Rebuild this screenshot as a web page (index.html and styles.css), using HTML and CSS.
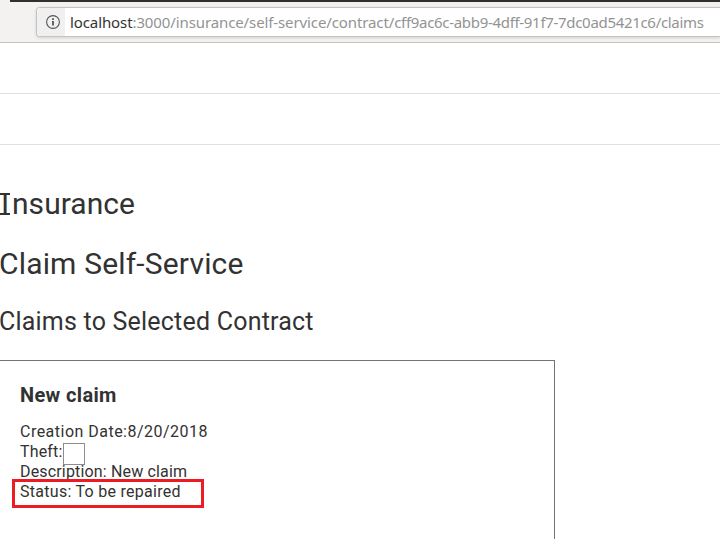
FILE: index.html
```
<!DOCTYPE html>
<html lang="en">
<head>
<meta charset="utf-8">
<title>Insurance – Claims</title>
<link rel="stylesheet" href="styles.css">
</head>
<body>
<div class="browser">
  <div class="address">
    <span class="identity">
      <svg width="14" height="14" viewBox="0 0 14 14" fill="none" stroke="#555">
        <circle cx="7" cy="7" r="6.4" stroke-width="1.1"/>
        <path d="M7 6v4.5M7 3.2v1.7" stroke-width="1.8"/>
      </svg>
    </span>
    <span class="url"><b>localhost</b>:3000/insurance/self-service/contract/<span class="id">cff9ac6c-abb9-4dff-91f7-7dc0ad5421c6/claims</span></span>
  </div>
</div>
<div class="band"></div>
<div class="band"></div>
<main>
  <h1 class="title"><span class="slab">I</span>nsurance</h1>
  <h1 class="subtitle">Claim Self-Service</h1>
  <h2>Claims to Selected Contract</h2>
  <section class="card">
    <h3>New claim</h3>
    <div class="row date">Creation Date:8/20/2018</div>
    <div class="row theft">Theft:<span class="box"></span></div>
    <div class="row desc">Description: New claim</div>
    <div class="row status">Status: To be repaired<span class="mark"></span></div>
  </section>
</main>
</body>
</html>
```
FILE: styles.css
```
* { box-sizing: border-box; }
body {
  margin: 0;
  height: 539px;
  overflow: hidden;
  background: #fff;
  color: #323232;
  font-family: Roboto, "Liberation Sans", sans-serif;
}
.browser {
  height: 43px;
  padding: 7px 0 0 36px;
  border-bottom: 1px solid #c4c2c0;
  background: linear-gradient(#31302c, #31302c) 10px 0 / 100% 2px no-repeat, #f3f2f1;
}
.address {
  display: flex;
  height: 30px;
  border: 1px solid #c5c3c1;
  border-right: 0;
  border-radius: 4px 0 0 4px;
  background: #fff;
  overflow: hidden;
  box-shadow: 0 1px 3px #0002;
}
.identity {
  width: 28px;
  flex: none;
  padding: 7px 0 0 9px;
  background: #f0f0f0;
}
.identity svg { display: block; }
.url {
  padding-left: 5px;
  font: 15px/29px "Noto Sans", sans-serif;
  letter-spacing: -0.11px;
  white-space: nowrap;
  color: #939393;
}
.url b { font-weight: 400; letter-spacing: -0.1px; color: #333; }
.id { letter-spacing: -0.31px; }
.band { height: 51px; border-bottom: 1px solid #e0e0e0; }
h1, h2, h3 { margin: 0; font-weight: 400; white-space: nowrap; }
main { padding-top: 39px; }
h1 { font-size: 30px; line-height: 40px; letter-spacing: 0.05px; }
.subtitle { margin-top: 20px; margin-left: -1px; letter-spacing: 0.17px; }
h2 { margin: 20px 0 0 -1px; font-size: 25px; line-height: 36px; letter-spacing: 0.21px; }
.slab {
  display: inline-block;
  width: 12px;
  padding-right: 2px;
  text-align: center;
  letter-spacing: 0;
  background:
    linear-gradient(#323232, #323232) 0 9px / 10px 2px no-repeat,
    linear-gradient(#323232, #323232) 0 29px / 10px 2px no-repeat;
}
.card {
  width: 555px;
  height: 200px;
  margin-top: 20px;
  padding: 20px;
  border: 1px solid #747474;
  border-left: 0;
}
h3 { font-size: 20px; line-height: 28px; font-weight: 700; letter-spacing: 0.35px; }
.row { height: 20px; font-size: 16px; line-height: 20px; white-space: nowrap; }
.date { margin-top: 13px; letter-spacing: 0.48px; }
.theft { display: flex; letter-spacing: 0.15px; }
.box {
  flex: none;
  width: 22px;
  height: 22px;
  margin: 1px 0 0 1px;
  border: 1px solid #8d8d8d;
  background: #fff;
}
.desc { letter-spacing: 0.16px; }
.status { position: relative; letter-spacing: 0.28px; }
.mark {
  position: absolute;
  left: -8px;
  top: -3px;
  width: 192px;
  height: 29px;
  border: 3px solid #ed1c24;
}
```
